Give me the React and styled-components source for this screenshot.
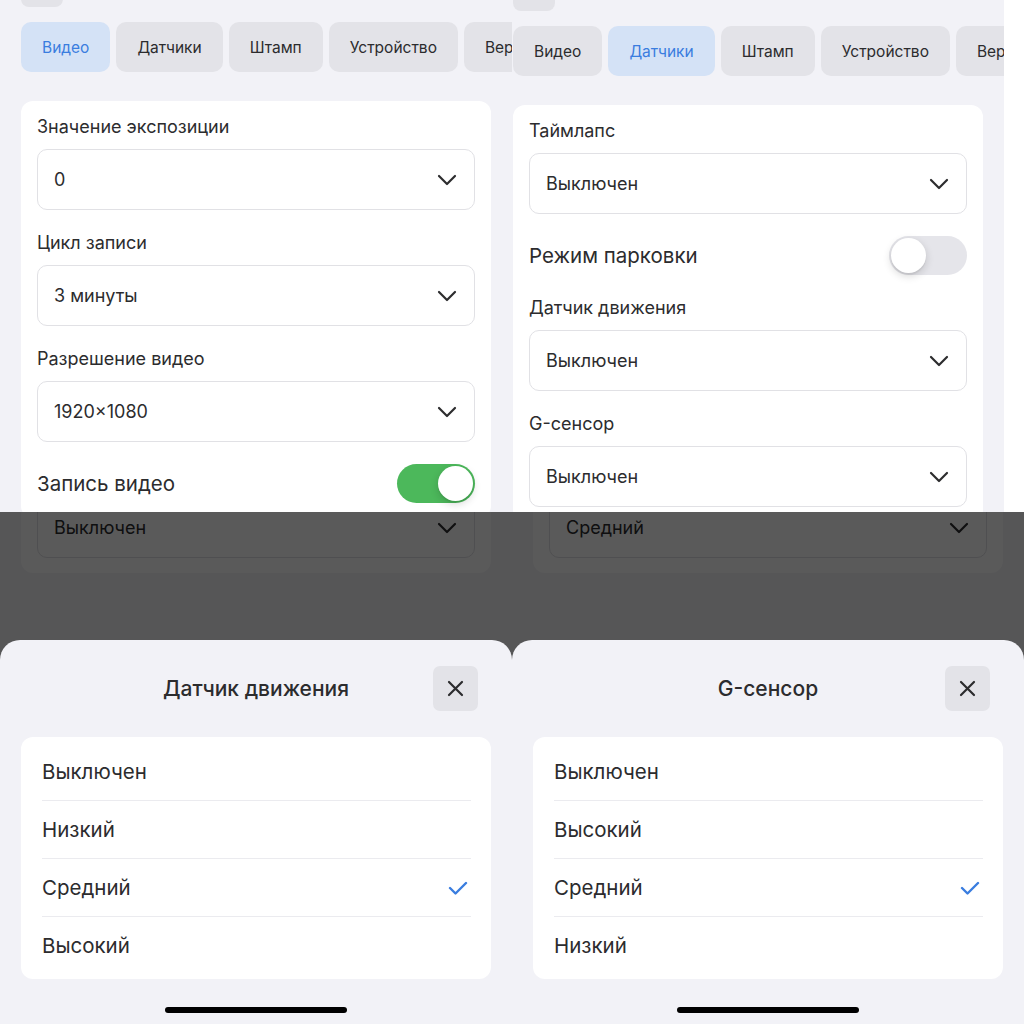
import styled, { createGlobalStyle } from 'styled-components';

const Global = createGlobalStyle`
  body {
    margin: 0;
    background: #fff;
    font-family: Inter, "Noto Sans", sans-serif;
    color: #2c2c2e;
  }
`;

const Grid = styled.div`
  display: grid;
  grid-template-columns: 512px 512px;
  grid-template-rows: 512px 512px;
  width: 1024px;
  height: 1024px;
`;

const Quadrant = styled.div`
  position: relative;
  overflow: hidden;
  background: #fff;
`;

const Screen = styled.div`
  position: relative;
  box-sizing: border-box;
  width: ${p => 512 + (p.$shiftX || 0)}px;
  height: 512px;
  padding-left: ${p => 21 + (p.$shiftX || 0)}px;
  background: #f2f2f7;
  overflow: hidden;
  display: flex;
  flex-direction: column;
`;

const BackButton = styled.div`
  flex-shrink: 0;
  width: 42px;
  height: 40px;
  margin-top: ${p => p.$bottom - 40}px;
  border-radius: 8px;
  background: #e3e3e8;
`;

const Tabs = styled.div`
  flex-shrink: 0;
  display: flex;
  gap: 6px;
  margin-top: 15px;
`;

const Tab = styled.div`
  flex-shrink: 0;
  height: 50px;
  padding: 0 21px;
  display: flex;
  align-items: center;
  border-radius: 10px;
  font-size: 15.5px;
  white-space: nowrap;
  background: ${p => (p.$active ? '#d4e2f6' : '#e3e3e8')};
  color: ${p => (p.$active ? '#3a7ddf' : '#2c2c2e')};
`;

const Card = styled.div`
  flex-shrink: 0;
  box-sizing: border-box;
  width: 470px;
  margin-top: 29px;
  padding: 15px 16px;
  background: #fff;
  border-radius: 12px;
  display: flex;
  flex-direction: column;
  gap: 22px;
`;

const Field = styled.div`
  display: flex;
  flex-direction: column;
`;

const Label = styled.div`
  font-size: 18px;
  line-height: 22px;
  margin-bottom: 11px;
`;

const Select = styled.div`
  flex-shrink: 0;
  box-sizing: border-box;
  height: 61px;
  padding: 0 17px 0 16px;
  border: 1px solid #e1e1e5;
  border-radius: 10px;
  display: flex;
  align-items: center;
  justify-content: space-between;
  font-size: 18px;
  background: #fff;
`;

const ToggleRow = styled.div`
  height: 39px;
  display: flex;
  align-items: center;
  justify-content: space-between;
  font-size: 20.5px;
`;

const Track = styled.div`
  position: relative;
  width: 78px;
  height: 39px;
  border-radius: 20px;
  background: ${p => (p.$on ? '#4cb85b' : '#e5e5ea')};
`;

const Knob = styled.div`
  position: absolute;
  top: 2px;
  left: ${p => (p.$on ? 41 : 2)}px;
  width: 35px;
  height: 35px;
  border-radius: 50%;
  background: #fff;
  box-shadow: 0 3px 8px rgba(0, 0, 0, 0.16), 0 2px 1px rgba(0, 0, 0, 0.05);
`;

const DimCard = styled.div`
  flex-shrink: 0;
  box-sizing: border-box;
  width: 470px;
  padding: 0 16px 15px;
  background: #fff;
  border-radius: 0 0 12px 12px;
`;

const CutFrame = styled.div`
  height: 46px;
  overflow: hidden;
  display: flex;
  flex-direction: column;
  & > div {
    margin-top: -15px;
  }
`;

const Backdrop = styled.div`
  position: absolute;
  inset: 0;
  background: rgba(0, 0, 0, 0.648);
`;

const Sheet = styled.div`
  position: absolute;
  left: 0;
  right: 0;
  bottom: 0;
  height: 384px;
  background: #f2f2f7;
  border-radius: 20px 20px 0 0;
  display: flex;
  flex-direction: column;
`;

const SheetHeader = styled.div`
  display: grid;
  grid-template-columns: 45px 1fr 45px;
  align-items: center;
  padding: 26px 34px 0;
`;

const SheetTitle = styled.div`
  grid-column: 2;
  text-align: center;
  font-size: 21px;
  font-weight: 500;
`;

const CloseButton = styled.div`
  width: 45px;
  height: 45px;
  border-radius: 7px;
  background: #e3e3e8;
  display: flex;
  align-items: center;
  justify-content: center;
`;

const OptionList = styled.div`
  margin: 26px 21px 0;
  padding: 5px 0;
  background: #fff;
  border-radius: 12px;
  display: flex;
  flex-direction: column;
`;

const Option = styled.div`
  box-sizing: border-box;
  height: 58px;
  margin: 0 20px 0 21px;
  padding-right: 3px;
  display: flex;
  align-items: center;
  justify-content: space-between;
  font-size: 20.5px;
  & + & {
    border-top: 1px solid #ebebef;
  }
`;

const HomeBar = styled.div`
  align-self: center;
  width: 182px;
  height: 6px;
  margin-top: 28px;
  border-radius: 3px;
  background: #000;
`;

const Chevron = () => (
  <svg width="20" height="12" viewBox="0 0 20 12">
    <polyline points="2,2 10,10 18,2" fill="none" stroke="#2c2c2e" strokeWidth="2.2" strokeLinecap="round" strokeLinejoin="round" />
  </svg>
);

const Check = () => (
  <svg width="20" height="14" viewBox="0 0 20 14">
    <polyline points="2,7 7.5,12.5 18,2" fill="none" stroke="#3a7ddf" strokeWidth="2.4" strokeLinecap="round" strokeLinejoin="round" />
  </svg>
);

const Cross = () => (
  <svg width="17" height="17" viewBox="0 0 17 17">
    <path d="M2 2 L15 15 M15 2 L2 15" stroke="#2c2c2e" strokeWidth="2.2" strokeLinecap="round" />
  </svg>
);

const TABS = ['Видео', 'Датчики', 'Штамп', 'Устройство', 'Версия'];

function SelectField({ label, value }) {
  return (
    <Field>
      <Label>{label}</Label>
      <Select>
        <span>{value}</span>
        <Chevron />
      </Select>
    </Field>
  );
}

function Toggle({ label, on }) {
  return (
    <ToggleRow>
      <span>{label}</span>
      <Track $on={on}>
        <Knob $on={on} />
      </Track>
    </ToggleRow>
  );
}

function SettingsScreen({ active, shiftX, shiftY, children }) {
  return (
    <Screen $shiftX={shiftX}>
      <BackButton $bottom={7 + shiftY} />
      <Tabs>
        {TABS.map((t, i) => (
          <Tab key={t} $active={i === active}>{t}</Tab>
        ))}
      </Tabs>
      <Card>{children}</Card>
    </Screen>
  );
}

function PickerScreen({ current, title, options, selected }) {
  return (
    <Screen>
      <DimCard>
        <CutFrame>
          <Select>
            <span>{current}</span>
            <Chevron />
          </Select>
        </CutFrame>
      </DimCard>
      <Backdrop />
      <Sheet>
        <SheetHeader>
          <SheetTitle>{title}</SheetTitle>
          <CloseButton>
            <Cross />
          </CloseButton>
        </SheetHeader>
        <OptionList>
          {options.map(o => (
            <Option key={o}>
              <span>{o}</span>
              {o === selected && <Check />}
            </Option>
          ))}
        </OptionList>
        <HomeBar />
      </Sheet>
    </Screen>
  );
}

export default function App() {
  return (
    <Grid>
      <Global />
      <Quadrant>
        <SettingsScreen active={0} shiftX={0} shiftY={0}>
          <SelectField label="Значение экспозиции" value="0" />
          <SelectField label="Цикл записи" value="3 минуты" />
          <SelectField label="Разрешение видео" value="1920×1080" />
          <Toggle label="Запись видео" on />
        </SettingsScreen>
      </Quadrant>
      <Quadrant>
        <SettingsScreen active={1} shiftX={-20} shiftY={4}>
          <SelectField label="Таймлапс" value="Выключен" />
          <Toggle label="Режим парковки" on={false} />
          <SelectField label="Датчик движения" value="Выключен" />
          <SelectField label="G-сенсор" value="Выключен" />
        </SettingsScreen>
      </Quadrant>
      <Quadrant>
        <PickerScreen
          current="Выключен"
          title="Датчик движения"
          options={['Выключен', 'Низкий', 'Средний', 'Высокий']}
          selected="Средний"
        />
      </Quadrant>
      <Quadrant>
        <PickerScreen
          current="Средний"
          title="G-сенсор"
          options={['Выключен', 'Высокий', 'Средний', 'Низкий']}
          selected="Средний"
        />
      </Quadrant>
    </Grid>
  );
}
